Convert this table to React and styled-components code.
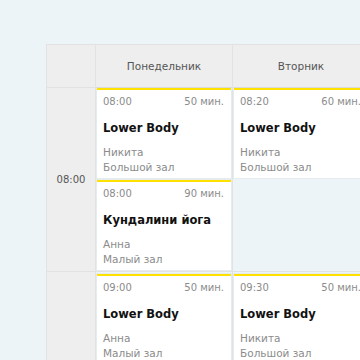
import styled, { createGlobalStyle } from "styled-components";

const GlobalStyle = createGlobalStyle`
  html, body {
    margin: 0;
    padding: 0;
    background: #edf4f7;
    font-family: "DejaVu Sans", "Noto Sans", sans-serif;
    overflow: hidden;
  }
`;

const Page = styled.div`
  padding: 44px 0 0 46px;
  width: 360px;
  height: 360px;
  box-sizing: border-box;
  overflow: hidden;
`;

const Schedule = styled.div`
  display: grid;
  grid-template-columns: 49px 137px 137px;
  grid-template-rows: 43px 184px auto;
  border-top: 1px solid #e2e2e2;
  border-left: 1px solid #e2e2e2;
  width: max-content;
`;

const Cell = styled.div`
  border-right: 1px solid #e2e2e2;
  border-bottom: 1px solid #e2e2e2;
  box-sizing: border-box;
`;

const HeadCell = styled(Cell)`
  background: #eeeeee;
  display: flex;
  align-items: center;
  justify-content: center;
  font-size: 10.5px;
  color: #555;
`;

const TimeCell = styled(Cell)`
  background: #eeeeee;
  display: flex;
  align-items: center;
  justify-content: center;
  font-size: 10px;
  color: #555;
`;

const DayCell = styled(Cell)`
  display: flex;
  flex-direction: column;
  gap: 2px;
  padding: ${(p) => (p.$first ? "0" : "2px")} 1px 1px 1px;
`;

const Card = styled.div`
  background: #fff;
  border-top: 2px solid #ffe100;
  padding: 4px 7px 3px 6px;
  box-shadow: 0 0 0 1px rgba(0, 0, 0, 0.03);
`;

const CardTop = styled.div`
  display: flex;
  justify-content: space-between;
  font-size: 10px;
  line-height: 15px;
  color: #8b8b8b;
  white-space: nowrap;
`;

const Title = styled.div`
  margin-top: 11px;
  font-size: 11.5px;
  font-weight: bold;
  line-height: 17px;
  color: #111;
  white-space: nowrap;
`;

const Info = styled.div`
  margin-top: 8px;
  font-size: 10.5px;
  line-height: 15px;
  color: #8b8b8b;
  white-space: nowrap;
`;

const days = ["Понедельник", "Вторник"];

const rows = [
  {
    time: "08:00",
    cells: [
      [
        { start: "08:00", len: "50 мин.", name: "Lower Body", coach: "Никита", room: "Большой зал" },
        { start: "08:00", len: "90 мин.", name: "Кундалини йога", coach: "Анна", room: "Малый зал" },
      ],
      [{ start: "08:20", len: "60 мин.", name: "Lower Body", coach: "Никита", room: "Большой зал" }],
    ],
  },
  {
    time: "",
    cells: [
      [{ start: "09:00", len: "50 мин.", name: "Lower Body", coach: "Анна", room: "Малый зал" }],
      [{ start: "09:30", len: "50 мин.", name: "Lower Body", coach: "Никита", room: "Большой зал" }],
    ],
  },
];

function Lesson({ item }) {
  return (
    <Card>
      <CardTop>
        <span>{item.start}</span>
        <span>{item.len}</span>
      </CardTop>
      <Title>{item.name}</Title>
      <Info>
        {item.coach}
        <br />
        {item.room}
      </Info>
    </Card>
  );
}

export default function App() {
  return (
    <Page>
      <GlobalStyle />
      <Schedule>
        <HeadCell />
        {days.map((d) => (
          <HeadCell key={d}>{d}</HeadCell>
        ))}
        {rows.map((row, ri) => (
          <>
            <TimeCell key={"t" + ri}>{row.time}</TimeCell>
            {row.cells.map((list, ci) => (
              <DayCell key={ri + "-" + ci} $first={ri === 0}>
                {list.map((item, i) => (
                  <Lesson key={i} item={item} />
                ))}
              </DayCell>
            ))}
          </>
        ))}
      </Schedule>
    </Page>
  );
}
